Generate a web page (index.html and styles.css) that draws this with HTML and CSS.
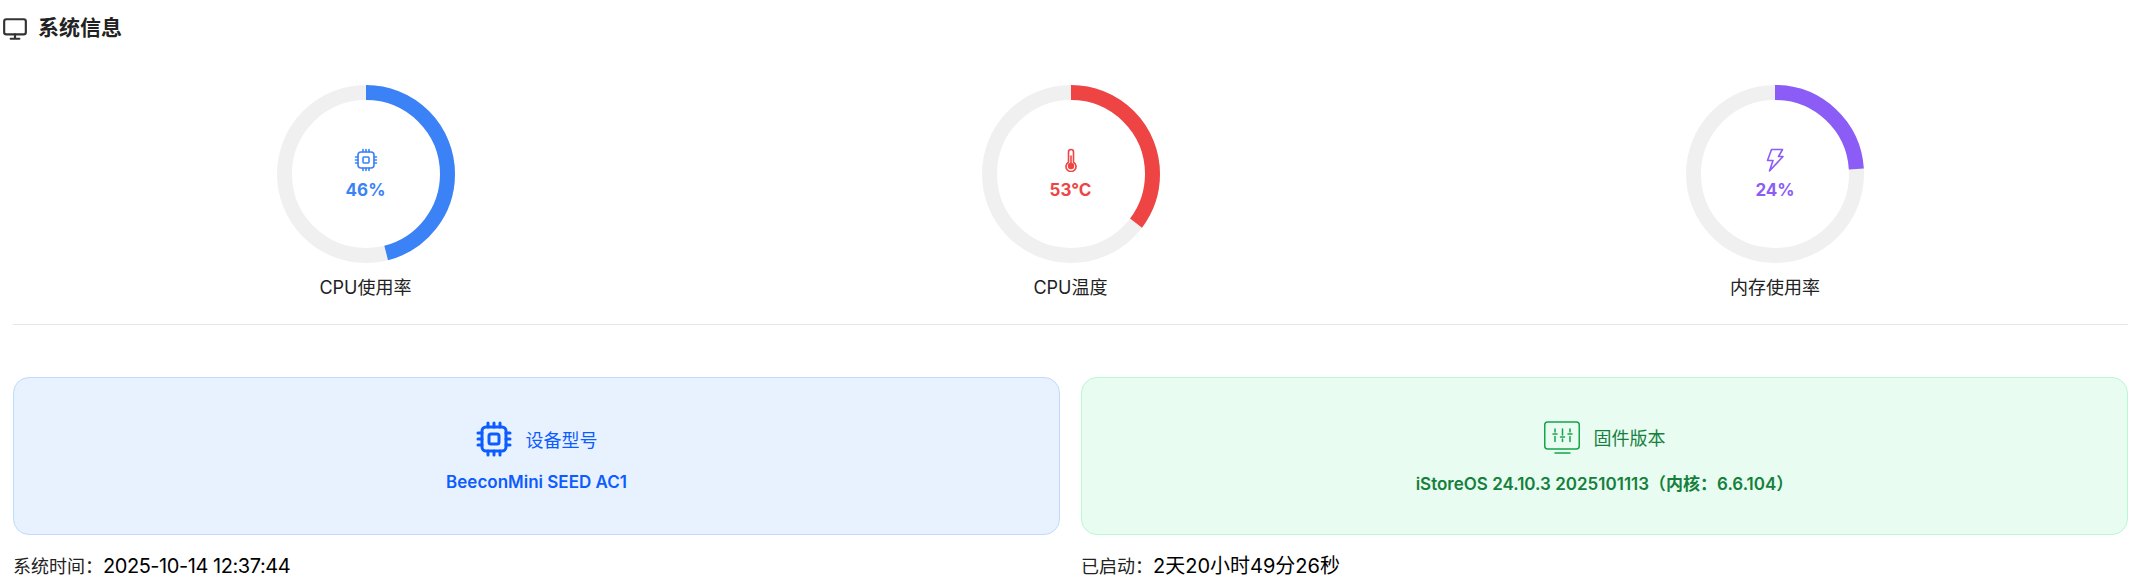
FILE: index.html
```html
<!DOCTYPE html>
<html lang="zh-CN">
<head>
    <meta charset="UTF-8">
    <meta name="viewport" content="width=device-width, initial-scale=1.0">
    <title>系统信息</title>
    <link rel="stylesheet" href="styles.css">
</head>
<body>

<header class="title-bar">
    <svg class="title-icon" viewBox="0 0 24 24" fill="none" stroke="currentColor" stroke-width="2" stroke-linecap="round" stroke-linejoin="round">
        <rect x="2" y="3" width="20" height="14" rx="2"/>
        <path d="M8 21h8M12 17v4"/>
    </svg>
    <h1>系统信息</h1>
</header>

<section class="gauges">
    <div class="gauge gauge-blue">
        <div class="ring">
            <svg class="ring-svg" viewBox="0 0 178 178">
                <circle class="ring-track" cx="89" cy="89" r="81.5"/>
                <circle class="ring-value" cx="89" cy="89" r="81.5" pathLength="100" stroke-dasharray="46 100"/>
            </svg>
            <div class="ring-center">
                <svg class="ring-icon" viewBox="0 0 24 24" fill="none" stroke="currentColor" stroke-width="1.6" stroke-linecap="round" stroke-linejoin="round">
                    <rect x="4" y="4" width="16" height="16" rx="3"/>
                    <rect x="9" y="9" width="6" height="6" rx="1"/>
                    <path d="M9 1.5V4M12 1.5V4M15 1.5V4M9 20v2.5M12 20v2.5M15 20v2.5M1.5 9H4M1.5 12H4M1.5 15H4M20 9h2.5M20 12h2.5M20 15h2.5"/>
                </svg>
                <span class="ring-text">46%</span>
            </div>
        </div>
        <div class="gauge-label">CPU使用率</div>
    </div>
    <div class="gauge gauge-red">
        <div class="ring">
            <svg class="ring-svg" viewBox="0 0 178 178">
                <circle class="ring-track" cx="89" cy="89" r="81.5"/>
                <circle class="ring-value" cx="89" cy="89" r="81.5" pathLength="100" stroke-dasharray="35.3 100"/>
            </svg>
            <div class="ring-center">
                <svg class="ring-icon" viewBox="0 0 24 24" fill="none" stroke="currentColor" stroke-width="1.6" stroke-linecap="round" stroke-linejoin="round">
                    <path d="M9.5 4a2.5 2.5 0 0 1 5 0v10.2a5 5 0 1 1-5 0z"/>
                    <circle cx="12" cy="18" r="2.4" fill="currentColor"/>
                    <path d="M12 8v9"/>
                </svg>
                <span class="ring-text">53℃</span>
            </div>
        </div>
        <div class="gauge-label">CPU温度</div>
    </div>
    <div class="gauge gauge-purple">
        <div class="ring">
            <svg class="ring-svg" viewBox="0 0 178 178">
                <circle class="ring-track" cx="89" cy="89" r="81.5"/>
                <circle class="ring-value" cx="89" cy="89" r="81.5" pathLength="100" stroke-dasharray="24 100"/>
            </svg>
            <div class="ring-center">
                <svg class="ring-icon" viewBox="0 0 24 24" fill="none" stroke="currentColor" stroke-width="1.6" stroke-linejoin="round">
                    <path d="M8.5 1.5h11l-4 7h4.5L6.5 23l3.5-10.500H4.500z"/>
                </svg>
                <span class="ring-text">24%</span>
            </div>
        </div>
        <div class="gauge-label">内存使用率</div>
    </div>
</section>

<section class="cards">
    <div class="info-col">
        <div class="card card-blue">
            <div class="card-head">
                <svg class="card-icon" viewBox="0 0 36 36" fill="none" stroke="currentColor" stroke-width="3" stroke-linecap="round" stroke-linejoin="round">
                    <rect x="6" y="6" width="24" height="24" rx="4"/>
                    <rect x="13" y="13" width="10" height="10" rx="2"/>
                    <path d="M12 2v4M18 2v4M24 2v4M12 30v4M18 30v4M24 30v4M2 12h4M2 18h4M2 24h4M30 12h4M30 18h4M30 24h4"/>
                </svg>
                <span>设备型号</span>
            </div>
            <div class="card-value">BeeconMini SEED AC1</div>
        </div>
        <div class="meta"><span class="meta-key">系统时间：</span><span class="meta-value meta-date">2025-10-14 12:37:44</span></div>
    </div>
    <div class="info-col">
        <div class="card card-green">
            <div class="card-head">
                <svg class="card-icon" viewBox="0 0 36 36" fill="none" stroke="currentColor" stroke-width="1.5" stroke-linecap="round" stroke-linejoin="round">
                    <rect x="0.75" y="3" width="34.5" height="27" rx="3"/>
                    <path d="M11 34h15"/>
                    <path d="M11 10v3M11 17.500v5M18.500 10v6M18.500 20v2.500M26 10v3M26 17.500v5"/>
                    <path d="M9 15h4M16.500 18h4M24 15h4"/>
                </svg>
                <span>固件版本</span>
            </div>
            <div class="card-value">iStoreOS 24.10.3 2025101113（内核：6.6.104）</div>
        </div>
        <div class="meta"><span class="meta-key">已启动：</span><span class="meta-value">2天20小时49分26秒</span></div>
    </div>
</section>

</body>
</html>
```

FILE: styles.css
```css
* {
    margin: 0;
    padding: 0;
    box-sizing: border-box;
}

body {
    font-family: 'Inter', 'Noto Sans CJK SC', sans-serif;
    background-color: white;
    color: #222;
    padding: 0 7px 0 13px;
}

.title-bar {
    display: flex;
    align-items: center;
    gap: 10px;
    height: 58px;
    margin-left: -11px;
}

.title-icon {
    width: 26px;
    height: 26px;
    color: #333;
}

.title-bar h1 {
    font-size: 21px;
    font-weight: 700;
    line-height: 26px;
    margin-top: -2px;
    color: #222;
}

.gauges {
    display: grid;
    grid-template-columns: 705px 705px 704px;
    padding-top: 27px;
    height: 267px;
    border-bottom: 1px solid #e5e7eb;
}

.gauge {
    display: flex;
    flex-direction: column;
    align-items: center;
}

.ring {
    position: relative;
    width: 178px;
    height: 178px;
}

.ring-svg {
    display: block;
    transform: rotate(-90deg);
}

.ring-track,
.ring-value {
    fill: none;
    stroke-width: 15;
}

.ring-track {
    stroke: #f0f0f0;
}

.ring-center {
    position: absolute;
    inset: 0;
    display: flex;
    flex-direction: column;
    align-items: center;
    justify-content: center;
    gap: 6px;
    padding-top: 1px;
}

.ring-icon {
    width: 24px;
    height: 24px;
}

.ring-text {
    font-size: 17px;
    font-weight: 700;
    line-height: 24px;
}

.gauge-blue .ring-value { stroke: #3b82f6; }
.gauge-blue .ring-center { color: #3b82f6; }
.gauge-red .ring-value { stroke: #ef4444; }
.gauge-red .ring-center { color: #ef4444; }
.gauge-purple .ring-value { stroke: #8b5cf6; }
.gauge-purple .ring-center { color: #8b5cf6; }

.gauge-label {
    margin-top: 13px;
    font-size: 18px;
    line-height: 24px;
    color: #222;
}

.cards {
    display: grid;
    grid-template-columns: 1fr 1fr;
    gap: 21px;
    margin-top: 52px;
}

.card {
    display: flex;
    flex-direction: column;
    align-items: center;
    justify-content: center;
    gap: 15px;
    height: 158px;
    border: 1px solid;
    border-radius: 16px;
    padding-top: 1px;
}

.card-blue {
    background-color: #e8f2ff;
    border-color: #bfdbfe;
    color: #0d5cff;
}

.card-green {
    background-color: #e9fcf1;
    border-color: #bbf7d0;
    color: #15803d;
}

.card-head {
    display: flex;
    align-items: center;
    gap: 14px;
    font-size: 18px;
}

.card-icon {
    width: 36px;
    height: 36px;
}

.card-green .card-icon {
    color: #16a34a;
}

.card-value {
    font-size: 17px;
    font-weight: 600;
}

.meta {
    display: flex;
    align-items: baseline;
    margin-top: 18px;
    font-size: 18px;
    line-height: 26px;
    color: #000;
}

.meta-key {
    color: #222;
}

.meta-value {
    font-size: 20px;
}

.meta-date {
    letter-spacing: -0.45px;
}
```
